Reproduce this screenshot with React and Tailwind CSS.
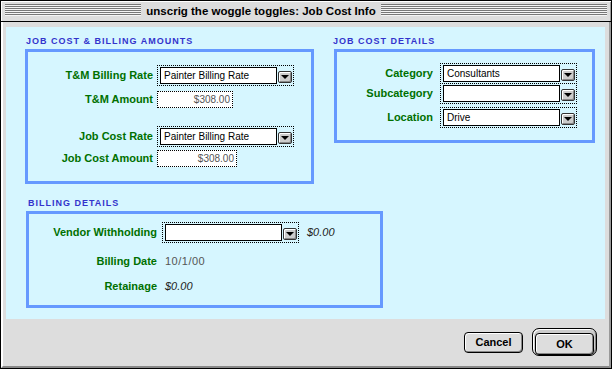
import React from 'react'

const FONT = "font-['Liberation_Sans',Arial,sans-serif]"

function Stripes({ className = '' }) {
  return (
    <div className={`flex flex-col mt-[3px] ${className}`}>
      {[0, 1, 2, 3, 4, 5].map(i => (
        <React.Fragment key={i}>
          <div className="h-px bg-[#777777]" />
          <div className="h-px bg-[#f4f4f4]" />
        </React.Fragment>
      ))}
    </div>
  )
}

function ArrowBtn() {
  return (
    <div className="ml-[1px] w-[14px] h-[12px] mt-[2px] rounded-[2px] border border-[#333333] bg-[#cccccc] shadow-[inset_1px_1px_0_#ffffff,inset_-1px_-1px_0_#888888] flex items-center justify-center">
      <div className="w-0 h-0 border-l-[4px] border-r-[4px] border-t-[4px] border-l-transparent border-r-transparent border-t-black" />
    </div>
  )
}

function Popup({ value, className = '' }) {
  return (
    <div className={`flex items-center h-[21px] border border-dotted border-black pl-[2px] pr-[1px] ${className}`}>
      <div className="h-[17px] w-[117px] border border-black bg-white px-[3px] text-[10px] leading-[15px] text-black whitespace-nowrap">
        {value}
      </div>
      <ArrowBtn />
    </div>
  )
}

function Amount({ value, w }) {
  return (
    <div className={`h-[17px] ${w} border border-dotted border-black bg-white pr-[2px] text-right text-[10px] leading-[15px] text-[#555555]`}>
      {value}
    </div>
  )
}

function Label({ children, w }) {
  return (
    <div className={`${w} shrink-0 text-right text-[11px] font-bold text-[#007000] whitespace-nowrap`}>
      {children}
    </div>
  )
}

function Heading({ children, className = '' }) {
  return (
    <div className={`h-[16px] leading-[16px] text-[9px] font-bold tracking-[1px] text-[#3333cc] whitespace-nowrap ${className}`}>
      {children}
    </div>
  )
}

export default function App() {
  return (
    <div className={`w-[612px] h-[369px] border border-black bg-[#dddddd] flex flex-col ${FONT}`}>
      {/* Title bar */}
      <div className="h-[21px] shrink-0 border-b border-black flex items-start px-[4px] shadow-[inset_1px_1px_0_#ffffff,inset_-1px_0_0_#999999]">
        <Stripes className="w-[136px] shrink-0" />
        <div className="w-[240px] shrink-0 text-center h-[20px] leading-[21px] text-[11.5px] font-bold text-black whitespace-nowrap">
          unscrig the woggle toggles: Job Cost Info
        </div>
        <Stripes className="flex-1" />
      </div>

      {/* Body */}
      <div className="flex-1 flex flex-col border-l-2 border-l-white border-r-2 border-r-[#999999] border-b-2 border-b-[#888888]">
        <div className="ml-[3px] mt-[5px] w-[599px] h-[292px] bg-[#d6f6ff] pt-[6px]">
          <div className="flex items-start">
            {/* Job cost & billing amounts */}
            <div className="ml-[19px] w-[289px]">
              <Heading className="pl-px">JOB COST &amp; BILLING AMOUNTS</Heading>
              <div className="h-[135px] border-[3px] border-[#6699ff] pt-[13px] flex flex-col">
                <div className="flex items-center">
                  <Label w="w-[125px]">T&amp;M Billing Rate</Label>
                  <Popup value="Painter Billing Rate" className="ml-[4px]" />
                </div>
                <div className="flex items-center mt-[5px]">
                  <Label w="w-[125px]">T&amp;M Amount</Label>
                  <div className="ml-[4px]">
                    <Amount value="$308.00" w="w-[76px]" />
                  </div>
                </div>
                <div className="flex items-center mt-[18px]">
                  <Label w="w-[125px]">Job Cost Rate</Label>
                  <Popup value="Painter Billing Rate" className="ml-[4px]" />
                </div>
                <div className="flex items-center mt-[3px]">
                  <Label w="w-[125px]">Job Cost Amount</Label>
                  <div className="ml-[4px]">
                    <Amount value="$308.00" w="w-[80px]" />
                  </div>
                </div>
              </div>
            </div>

            {/* Job cost details */}
            <div className="ml-[20px] w-[261px]">
              <Heading className="-ml-px">JOB COST DETAILS</Heading>
              <div className="h-[94px] border-[3px] border-[#6699ff] pt-[11px] flex flex-col">
                <div className="flex items-center">
                  <Label w="w-[96px]">Category</Label>
                  <Popup value="Consultants" className="ml-[7px]" />
                </div>
                <div className="flex items-center -mt-px">
                  <Label w="w-[96px]">Subcategory</Label>
                  <Popup value="" className="ml-[7px]" />
                </div>
                <div className="flex items-center mt-[3px]">
                  <Label w="w-[96px]">Location</Label>
                  <Popup value="Drive" className="ml-[7px]" />
                </div>
              </div>
            </div>
          </div>

          {/* Billing details */}
          <div className="ml-[20px] mt-[11px] w-[357px]">
            <Heading className="pl-[2px]">BILLING DETAILS</Heading>
            <div className="h-[97px] border-[3px] border-[#6699ff] pt-[8px] flex flex-col">
              <div className="flex items-center">
                <Label w="w-[128px]">Vendor Withholding</Label>
                <Popup value="" className="ml-[5px]" />
                <div className="ml-[8px] text-[11px] italic text-[#222222]">$0.00</div>
              </div>
              <div className="flex items-center mt-[10px] h-[16px]">
                <Label w="w-[128px]">Billing Date</Label>
                <div className="ml-[8px] text-[11px] tracking-[0.5px] text-[#555555]">10/1/00</div>
              </div>
              <div className="flex items-center mt-[9px] h-[16px]">
                <Label w="w-[128px]">Retainage</Label>
                <div className="ml-[8px] text-[11px] italic text-[#222222]">$0.00</div>
              </div>
            </div>
          </div>
        </div>

        {/* Buttons */}
        <div className="mt-[9px] flex items-center justify-end gap-[9px] pr-[12px]">
          <button className="w-[59px] h-[21px] rounded-[4px] border border-black bg-[#dddddd] shadow-[inset_1px_1px_0_#ffffff,inset_-1px_-1px_0_#888888] text-[11px] font-bold text-black leading-[19px]">
            Cancel
          </button>
          <div className="w-[65px] h-[28px] rounded-[7px] border border-black bg-[#cccccc] p-[2px] shadow-[inset_1px_1px_0_#ffffff,inset_-1px_-1px_0_#888888]">
            <button className="w-full h-full rounded-[4px] border border-black bg-[#dddddd] shadow-[inset_1px_1px_0_#ffffff,inset_-1px_-1px_0_#888888] text-[11px] font-bold text-black leading-[20px]">
              OK
            </button>
          </div>
        </div>
      </div>
    </div>
  )
}
